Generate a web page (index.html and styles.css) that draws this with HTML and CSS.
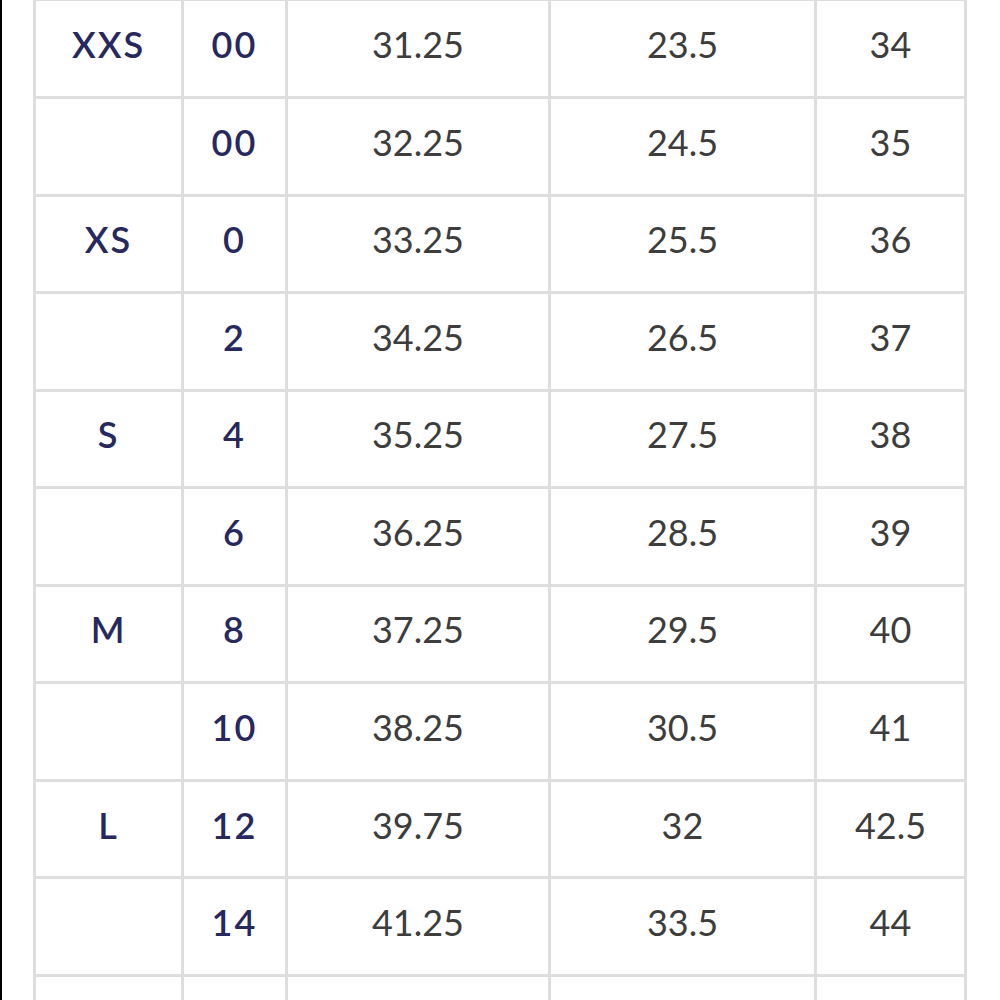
FILE: index.html
```html
<!DOCTYPE html>
<html lang="en">
<head>
<meta charset="utf-8">
<title>Size chart</title>
<link rel="stylesheet" href="styles.css">
</head>
<body>
<div class="page">
  <div class="edge"></div>
  <div class="chart">
    <div class="cell size">XXS</div><div class="cell size">00</div><div class="cell num">31.25</div><div class="cell num">23.5</div><div class="cell num">34</div>
    <div class="cell size"></div><div class="cell size">00</div><div class="cell num">32.25</div><div class="cell num">24.5</div><div class="cell num">35</div>
    <div class="cell size">XS</div><div class="cell size">0</div><div class="cell num">33.25</div><div class="cell num">25.5</div><div class="cell num">36</div>
    <div class="cell size"></div><div class="cell size">2</div><div class="cell num">34.25</div><div class="cell num">26.5</div><div class="cell num">37</div>
    <div class="cell size">S</div><div class="cell size">4</div><div class="cell num">35.25</div><div class="cell num">27.5</div><div class="cell num">38</div>
    <div class="cell size"></div><div class="cell size">6</div><div class="cell num">36.25</div><div class="cell num">28.5</div><div class="cell num">39</div>
    <div class="cell size">M</div><div class="cell size">8</div><div class="cell num">37.25</div><div class="cell num">29.5</div><div class="cell num">40</div>
    <div class="cell size"></div><div class="cell size">10</div><div class="cell num">38.25</div><div class="cell num">30.5</div><div class="cell num">41</div>
    <div class="cell size">L</div><div class="cell size">12</div><div class="cell num">39.75</div><div class="cell num">32</div><div class="cell num">42.5</div>
    <div class="cell size"></div><div class="cell size">14</div><div class="cell num">41.25</div><div class="cell num">33.5</div><div class="cell num">44</div>
    <div class="cell size"></div><div class="cell size"></div><div class="cell num"></div><div class="cell num"></div><div class="cell num"></div>
  </div>
</div>
</body>
</html>
```

FILE: styles.css
```css
html, body {
  margin: 0;
  padding: 0;
  background: #ffffff;
  overflow: hidden;
}

.page {
  display: flex;
  align-items: flex-start;
  height: 1000px;
  overflow: hidden;
}

.edge {
  width: 2px;
  height: 1000px;
  background: #000000;
  flex: none;
}

.chart {
  margin-left: 31px;
  margin-top: -1.6px;
  display: grid;
  grid-template-columns: 145px 101px 260px 263px 147px;
  grid-auto-rows: 94.56px;
  gap: 3px;
  padding: 3px;
  background: #dedede;
  flex: none;
}

.cell {
  background: #ffffff;
  display: flex;
  align-items: center;
  justify-content: center;
  padding-bottom: 9px;
  box-sizing: border-box;
  font-family: Lato, "Noto Sans", sans-serif;
  font-size: 36px;
  line-height: 1;
}

.size {
  color: #27295e;
  font-weight: 600;
  letter-spacing: 2px;
}

.num {
  color: #3d3d3d;
  font-weight: 400;
}
```
